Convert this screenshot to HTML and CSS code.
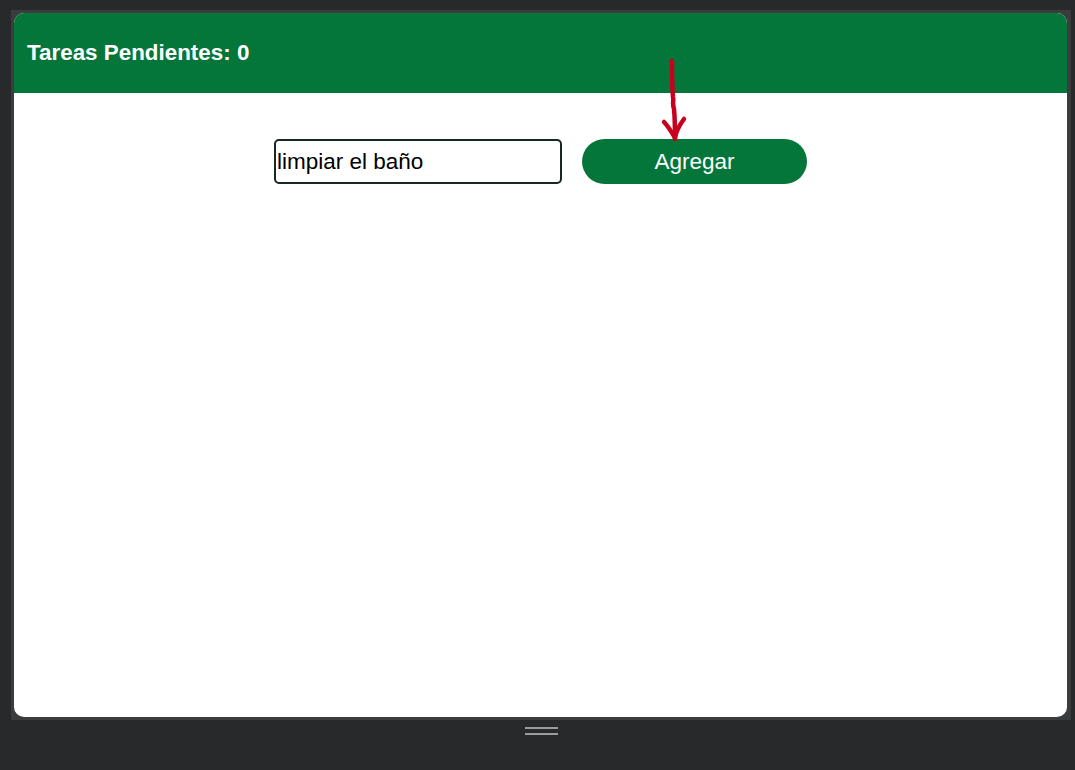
FILE: index.html
```html
<!DOCTYPE html>
<html lang="es">
<head>
<meta charset="utf-8">
<title>Tareas</title>
<link rel="stylesheet" href="styles.css">
</head>
<body>
<div class="workspace">
  <div class="frame">
    <div class="card">
      <header class="header">
        <h1 class="title">Tareas Pendientes: 0</h1>
      </header>
      <main class="content">
        <form class="task-form">
          <input class="task-input" type="text" value="limpiar el baño">
          <button class="add-btn" type="button">Agregar</button>
        </form>
      </main>
    </div>
  </div>
  <div class="grip">
    <span class="grip-line"></span>
    <span class="grip-line"></span>
  </div>
</div>
<svg class="annotation" width="40" height="90" viewBox="0 0 40 90">
  <path d="M12 2 C12 14 12 28 13 38 C14 42 12 44 14 50 C15 60 15 70 15 80" fill="none" stroke="#c8001e" stroke-width="4.5" stroke-linecap="round"/>
  <path d="M4 63 C8 67 11 72 15 79 C16 73 18 68 24 60" fill="none" stroke="#c8001e" stroke-width="4.5" stroke-linecap="round" stroke-linejoin="round"/>
</svg>
</body>
</html>
```
FILE: styles.css
```css
html, body {
  margin: 0;
  padding: 0;
  background: #28292a;
  height: 100%;
}
body {
  font-family: "Liberation Sans", Arial, sans-serif;
  position: relative;
}
.workspace {
  display: flex;
  flex-direction: column;
  padding: 10px 0 0 11px;
}
.frame {
  width: 1060px;
  height: 710px;
  box-sizing: border-box;
  padding: 3px 4px 3px 3px;
  background: #3b3c3d;
}
.card {
  height: 100%;
  background: #ffffff;
  border-radius: 10px;
  overflow: hidden;
  display: flex;
  flex-direction: column;
}
.header {
  height: 80px;
  background: #04763a;
  display: flex;
  align-items: center;
  padding: 0 13px;
  flex-shrink: 0;
}
.title {
  margin: 0;
  color: #ffffff;
  font-size: 22.4px;
  font-weight: bold;
}
.content {
  flex: 1;
}
.task-form {
  display: flex;
  justify-content: center;
  gap: 20px;
  margin-top: 46px;
}
.task-input {
  width: 288px;
  height: 45px;
  box-sizing: border-box;
  border: 2px solid #17291f;
  border-radius: 5px;
  padding: 0 1px;
  font-family: "Liberation Sans", Arial, sans-serif;
  font-size: 22.5px;
  color: #000;
  outline: none;
}
.add-btn {
  width: 225px;
  height: 45px;
  border: none;
  border-radius: 23px;
  background: #04763a;
  color: #ffffff;
  font-family: "Liberation Sans", Arial, sans-serif;
  font-size: 22.5px;
  padding: 0;
}
.grip {
  width: 1060px;
  display: flex;
  flex-direction: column;
  align-items: center;
  gap: 4px;
  margin-top: 7px;
  box-sizing: border-box;
}
.grip-line {
  display: block;
  width: 33px;
  height: 2px;
  background: #9a9b9c;
}
.annotation {
  position: absolute;
  left: 660px;
  top: 59px;
}
```
